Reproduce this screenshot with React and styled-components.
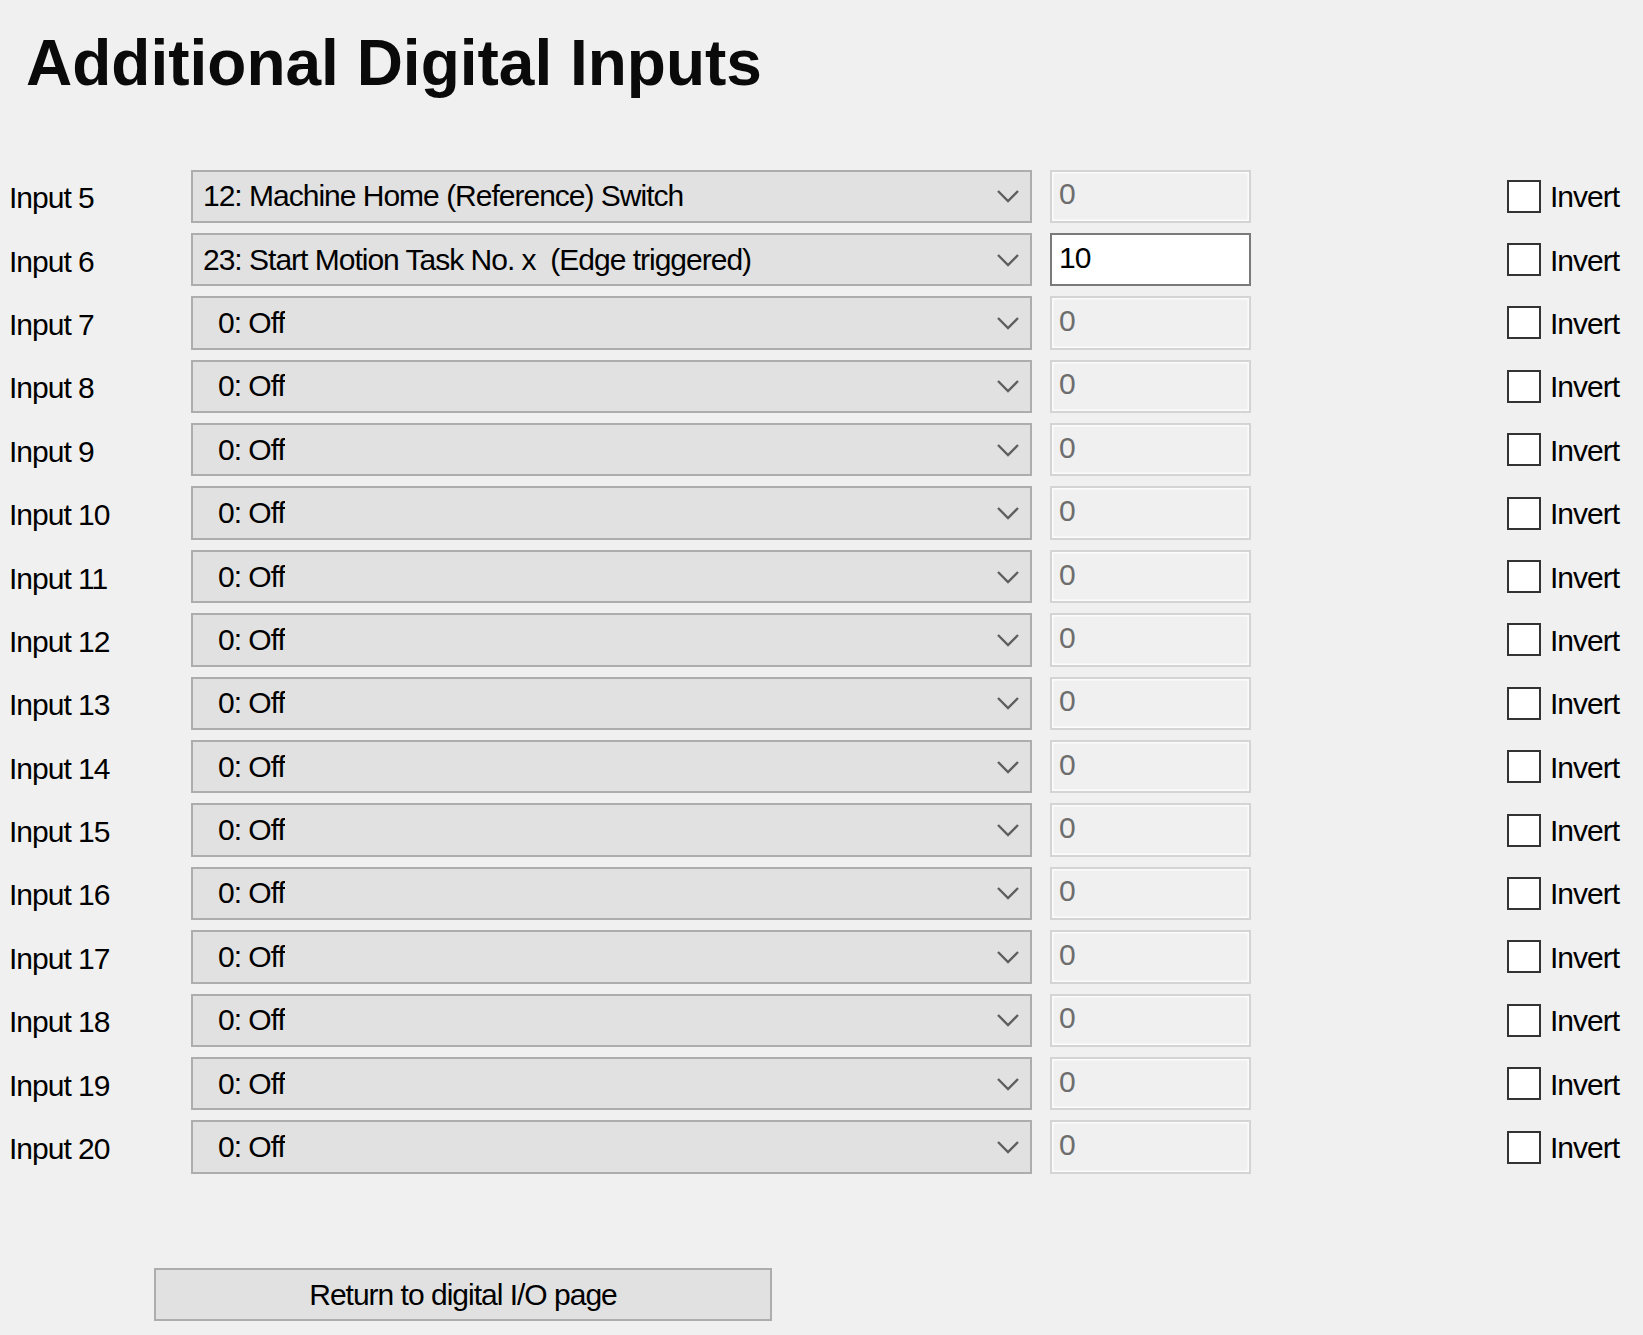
import React from "react";
import styled, { createGlobalStyle } from "styled-components";

const UI_FONT = `"Liberation Sans", Arial, sans-serif`;

const GlobalStyle = createGlobalStyle`
  html, body {
    margin: 0;
    padding: 0;
    background: #f0f0f0;
  }
  body {
    font-family: ${UI_FONT};
    color: #000;
  }
`;

const Page = styled.div`
  width: 1643px;
  min-height: 1335px;
  box-sizing: border-box;
  padding-top: 31px;
  background: #f0f0f0;
`;

const Title = styled.h1`
  margin: 0 0 0 26px;
  font-family: ${UI_FONT};
  font-weight: 700;
  font-size: 64px;
  line-height: 64px;
  height: 64px;
  color: #0a0a0a;
`;

const Rows = styled.div`
  margin-top: 74.5px;
  display: flex;
  flex-direction: column;
  gap: 10px;
`;

const Row = styled.div`
  display: flex;
  align-items: center;
  height: 53.4px;
`;

const Label = styled.div`
  width: 182px;
  padding-left: 9px;
  padding-top: 4px;
  font-size: 30px;
  letter-spacing: -1px;
  white-space: nowrap;
`;

const Combo = styled.div`
  box-sizing: border-box;
  width: 841px;
  height: 100%;
  display: flex;
  align-items: center;
  justify-content: space-between;
  background: #e1e1e1;
  border: 2px solid #adadad;
  padding: 0 10px 0 ${(p) => p.$indent}px;
  font-size: 30px;
  letter-spacing: -1px;
  white-space: pre;
  color: #000;
`;

const ComboText = styled.span`
  overflow: hidden;
`;

const Chevron = styled.svg`
  width: 24px;
  height: 14px;
  flex: none;
`;

const TextBox = styled.input`
  box-sizing: border-box;
  margin-left: 18px;
  width: 201px;
  height: 100%;
  padding: 0 0 4px 7px;
  font-family: ${UI_FONT};
  font-size: 30px;
  letter-spacing: -1px;
  outline: none;
  border: 2px solid ${(p) => (p.disabled ? "#d4d4d4" : "#7a7a7a")};
  box-shadow: ${(p) => (p.disabled ? "inset 0 0 0 1.5px #fbfbfb" : "none")};
  background: ${(p) => (p.disabled ? "#f0f0f0" : "#ffffff")};
  color: ${(p) => (p.disabled ? "#6d6d6d" : "#000")};
  -webkit-text-fill-color: ${(p) => (p.disabled ? "#6d6d6d" : "#000")};
  opacity: 1;
`;

const CheckWrap = styled.label`
  display: flex;
  align-items: center;
  margin-left: 256px;
  gap: 9px;
  font-size: 30px;
  letter-spacing: -1px;
  padding-top: 2px;
`;

const Box = styled.span`
  box-sizing: border-box;
  width: 34px;
  height: 33px;
  margin-top: -2px;
  background: #fff;
  border: 2.5px solid #333;
  flex: none;
`;

const Footer = styled.div`
  margin-top: 94px;
  padding-left: 154px;
`;

const Button = styled.button`
  box-sizing: border-box;
  width: 618px;
  height: 53px;
  background: #e1e1e1;
  border: 2px solid #adadad;
  font-family: ${UI_FONT};
  font-size: 30px;
  letter-spacing: -1px;
  color: #000;
  padding: 2px 0 0 0;
`;

const rows = [
  { n: 5, text: "12: Machine Home (Reference) Switch", indent: 10, value: "0", active: false },
  { n: 6, text: "23: Start Motion Task No. x  (Edge triggered)", indent: 10, value: "10", active: true },
  ...Array.from({ length: 14 }, (_, i) => ({
    n: 7 + i,
    text: "0: Off",
    indent: 25,
    value: "0",
    active: false,
  })),
];

function ChevronIcon() {
  return (
    <Chevron viewBox="0 0 24 14">
      <path d="M2 2 L12 12 L22 2" fill="none" stroke="#5f5f5f" strokeWidth="2.4" />
    </Chevron>
  );
}

export default function App() {
  return (
    <>
      <GlobalStyle />
      <Page>
        <Title>Additional Digital Inputs</Title>
        <Rows>
          {rows.map((r) => (
            <Row key={r.n}>
              <Label>Input {r.n}</Label>
              <Combo $indent={r.indent}>
                <ComboText>{r.text}</ComboText>
                <ChevronIcon />
              </Combo>
              <TextBox readOnly disabled={!r.active} defaultValue={r.value} />
              <CheckWrap>
                <Box />
                Invert
              </CheckWrap>
            </Row>
          ))}
        </Rows>
        <Footer>
          <Button>Return to digital I/O page</Button>
        </Footer>
      </Page>
    </>
  );
}
